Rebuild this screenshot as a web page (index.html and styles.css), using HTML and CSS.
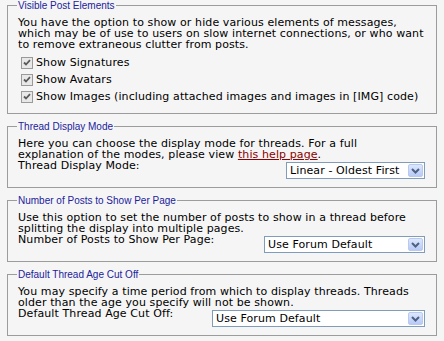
FILE: index.html
```html
<!DOCTYPE html>
<html lang="en">
<head>
  <meta charset="UTF-8">
  <title>Edit Options</title>
  <link rel="stylesheet" href="styles.css">
</head>
<body>
  <div class="page">
    <fieldset class="fieldset">
      <legend>Visible Post Elements</legend>
      <p class="desc">You have the option to show or hide various elements of messages,<br>which may be of use to users on slow internet connections, or who want<br>to remove extraneous clutter from posts.</p>
      <div class="checks">
        <label class="check"><span class="box"><svg width="12" height="12" viewBox="0 0 12 12"><rect x="0.5" y="0.5" width="11" height="11" fill="#e8e8e8" stroke="#9a9a9a"/><path d="M3 5.5 L5 7.5 L9 3.2" fill="none" stroke="#5a5a5a" stroke-width="1.8"/></svg></span>Show Signatures</label>
        <label class="check"><span class="box"><svg width="12" height="12" viewBox="0 0 12 12"><rect x="0.5" y="0.5" width="11" height="11" fill="#e8e8e8" stroke="#9a9a9a"/><path d="M3 5.5 L5 7.5 L9 3.2" fill="none" stroke="#5a5a5a" stroke-width="1.8"/></svg></span>Show Avatars</label>
        <label class="check"><span class="box"><svg width="12" height="12" viewBox="0 0 12 12"><rect x="0.5" y="0.5" width="11" height="11" fill="#e8e8e8" stroke="#9a9a9a"/><path d="M3 5.5 L5 7.5 L9 3.2" fill="none" stroke="#5a5a5a" stroke-width="1.8"/></svg></span>Show Images (including attached images and images in [IMG] code)</label>
      </div>
    </fieldset>

    <fieldset class="fieldset">
      <legend>Thread Display Mode</legend>
      <p class="desc">Here you can choose the display mode for threads. For a full<br>explanation of the modes, please view <a href="#">this help page</a>.</p>
      <div class="row">
        <span>Thread Display Mode:</span>
        <div class="select select-mode">
          <span>Linear - Oldest First</span>
          <span class="arrow"><svg width="9" height="6" viewBox="0 0 9 6"><path d="M1 1 L4.5 4.5 L8 1" fill="none" stroke="#4d6185" stroke-width="2"/></svg></span>
        </div>
      </div>
    </fieldset>

    <fieldset class="fieldset">
      <legend>Number of Posts to Show Per Page</legend>
      <p class="desc">Use this option to set the number of posts to show in a thread before<br>splitting the display into multiple pages.</p>
      <div class="row">
        <span>Number of Posts to Show Per Page:</span>
        <div class="select select-posts">
          <span>Use Forum Default</span>
          <span class="arrow"><svg width="9" height="6" viewBox="0 0 9 6"><path d="M1 1 L4.5 4.5 L8 1" fill="none" stroke="#4d6185" stroke-width="2"/></svg></span>
        </div>
      </div>
    </fieldset>

    <fieldset class="fieldset">
      <legend>Default Thread Age Cut Off</legend>
      <p class="desc">You may specify a time period from which to display threads. Threads<br>older than the age you specify will not be shown.</p>
      <div class="row">
        <span>Default Thread Age Cut Off:</span>
        <div class="select select-age">
          <span>Use Forum Default</span>
          <span class="arrow"><svg width="9" height="6" viewBox="0 0 9 6"><path d="M1 1 L4.5 4.5 L8 1" fill="none" stroke="#4d6185" stroke-width="2"/></svg></span>
        </div>
      </div>
    </fieldset>
  </div>
</body>
</html>
```

FILE: styles.css
```css
* { box-sizing: border-box; }
body {
  margin: 0;
  background: #f5f5f5;
  font: 11px/11px "DejaVu Sans", Verdana, sans-serif;
  letter-spacing: 0.1px;
  color: #000;
}
.page {
  padding: 0 7px;
}
.fieldset {
  margin: 0 0 7px;
  padding: 6px 11px 8px 10px;
  border: 1px solid #9c9c9c;
}
.fieldset legend {
  padding: 0 1px;
  margin-left: -1px;
  color: #22229c;
  font: 10px/11px "Liberation Sans", Tahoma, sans-serif;
  letter-spacing: 0;
}
.desc {
  margin: 0;
  white-space: nowrap;
}
.desc a {
  color: #8b0000;
}
.checks {
  margin-top: 4px;
}
.check {
  display: flex;
  align-items: center;
  height: 17px;
}
.box {
  display: flex;
  margin: 0 3px;
}
.row {
  display: flex;
  align-items: flex-start;
  justify-content: space-between;
}
.select {
  display: flex;
  align-items: center;
  justify-content: space-between;
  height: 17px;
  margin-top: 2px;
  padding: 0 1px 0 3px;
  background: #fff;
  border: 1px solid #7f9db9;
}
.select-mode { width: 139px; }
.select-posts { width: 161px; }
.select-age { width: 213px; }
.arrow {
  display: flex;
  align-items: center;
  justify-content: center;
  width: 15px;
  height: 13px;
  border: 1px solid #b9c9ef;
  border-radius: 2px;
  background: linear-gradient(#dde7fd, #b7caf6);
}
```
